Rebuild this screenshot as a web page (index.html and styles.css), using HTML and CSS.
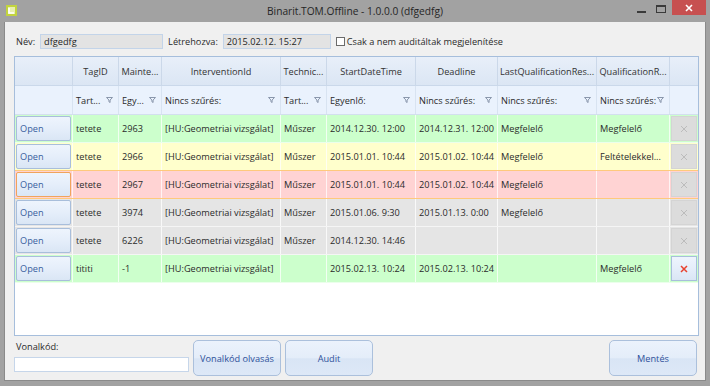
FILE: index.html
```html
<!DOCTYPE html>
<html lang="hu">
<head>
    <meta charset="UTF-8">
    <title>Binarit.TOM.Offline - 1.0.0.0 (dfgedfg)</title>
    <link rel="stylesheet" href="styles.css">
</head>
<body>
    <div class="window">
        <div class="titlebar">
            <svg class="app-icon" width="11" height="11" viewBox="0 0 11 11">
                <rect width="11" height="11" fill="#c2d43e"/>
                <rect x="2" y="2" width="7" height="7" fill="#e9f0b0"/>
                <path d="M3 3v5h5" stroke="#fff" stroke-width="1.6" fill="none"/>
            </svg>
            <div class="title">Binarit.TOM.Offline - 1.0.0.0 (dfgedfg)</div>
            <div class="controls">
                <span class="ctl min"></span>
                <span class="ctl max"></span>
                <span class="ctl close">
                    <svg width="8" height="8" viewBox="0 0 8 8"><path d="M1 1l6 6M7 1l-6 6" stroke="#fff" stroke-width="1.6"/></svg>
                </span>
            </div>
        </div>

        <div class="client">
            <div class="toprow">
                <span class="lbl">Név:</span>
                <div class="field name">dfgedfg</div>
                <span class="lbl created-lbl">Létrehozva:</span>
                <div class="field created">2015.02.12. 15:27</div>
                <label class="check"><span class="box"></span>Csak a nem auditáltak megjelenítése</label>
            </div>

            <div class="grid">
                <div class="row head">
                    <div class="cell"></div>
                    <div class="cell">TagID</div>
                    <div class="cell">Mainte...</div>
                    <div class="cell">InterventionId</div>
                    <div class="cell">Technic...</div>
                    <div class="cell">StartDateTime</div>
                    <div class="cell">Deadline</div>
                    <div class="cell">LastQualificationRes...</div>
                    <div class="cell">QualificationR...</div>
                    <div class="cell"></div>
                </div>
                <div class="row filter">
                    <div class="cell"></div>
                    <div class="cell">Tart...<svg class="funnel" viewBox="0 0 7 6"><path d="M.5.5h6L4.1 3v2.5L2.9 4.7V3z"/></svg></div>
                    <div class="cell">Egy...<svg class="funnel" viewBox="0 0 7 6"><path d="M.5.5h6L4.1 3v2.5L2.9 4.7V3z"/></svg></div>
                    <div class="cell">Nincs szűrés:<svg class="funnel" viewBox="0 0 7 6"><path d="M.5.5h6L4.1 3v2.5L2.9 4.7V3z"/></svg></div>
                    <div class="cell">Tart...<svg class="funnel" viewBox="0 0 7 6"><path d="M.5.5h6L4.1 3v2.5L2.9 4.7V3z"/></svg></div>
                    <div class="cell">Egyenlő:<svg class="funnel" viewBox="0 0 7 6"><path d="M.5.5h6L4.1 3v2.5L2.9 4.7V3z"/></svg></div>
                    <div class="cell">Nincs szűrés:<svg class="funnel" viewBox="0 0 7 6"><path d="M.5.5h6L4.1 3v2.5L2.9 4.7V3z"/></svg></div>
                    <div class="cell">Nincs szűrés:<svg class="funnel" viewBox="0 0 7 6"><path d="M.5.5h6L4.1 3v2.5L2.9 4.7V3z"/></svg></div>
                    <div class="cell">Nincs szűrés:<svg class="funnel" viewBox="0 0 7 6"><path d="M.5.5h6L4.1 3v2.5L2.9 4.7V3z"/></svg></div>
                    <div class="cell"></div>
                </div>

                <div class="row data green">
                    <div class="cell btn-cell"><button class="open">Open</button></div>
                    <div class="cell">tetete</div>
                    <div class="cell">2963</div>
                    <div class="cell">[HU:Geometriai vizsgálat]</div>
                    <div class="cell">Műszer</div>
                    <div class="cell">2014.12.30. 12:00</div>
                    <div class="cell">2014.12.31. 12:00</div>
                    <div class="cell">Megfelelő</div>
                    <div class="cell">Megfelelő</div>
                    <div class="cell btn-cell"><button class="del" disabled><svg viewBox="0 0 8 8"><path d="M1 1l6 6M7 1l-6 6"/></svg></button></div>
                </div>
                <div class="row data yellow">
                    <div class="cell btn-cell"><button class="open">Open</button></div>
                    <div class="cell">tetete</div>
                    <div class="cell">2966</div>
                    <div class="cell">[HU:Geometriai vizsgálat]</div>
                    <div class="cell">Műszer</div>
                    <div class="cell">2015.01.01. 10:44</div>
                    <div class="cell">2015.01.02. 10:44</div>
                    <div class="cell">Megfelelő</div>
                    <div class="cell">Feltételekkel...</div>
                    <div class="cell btn-cell"><button class="del" disabled><svg viewBox="0 0 8 8"><path d="M1 1l6 6M7 1l-6 6"/></svg></button></div>
                </div>
                <div class="row data red">
                    <div class="cell btn-cell"><button class="open focused">Open</button></div>
                    <div class="cell">tetete</div>
                    <div class="cell">2967</div>
                    <div class="cell">[HU:Geometriai vizsgálat]</div>
                    <div class="cell">Műszer</div>
                    <div class="cell">2015.01.01. 10:44</div>
                    <div class="cell">2015.01.02. 10:44</div>
                    <div class="cell">Megfelelő</div>
                    <div class="cell"></div>
                    <div class="cell btn-cell"><button class="del" disabled><svg viewBox="0 0 8 8"><path d="M1 1l6 6M7 1l-6 6"/></svg></button></div>
                </div>
                <div class="row data gray">
                    <div class="cell btn-cell"><button class="open">Open</button></div>
                    <div class="cell">tetete</div>
                    <div class="cell">3974</div>
                    <div class="cell">[HU:Geometriai vizsgálat]</div>
                    <div class="cell">Műszer</div>
                    <div class="cell">2015.01.06. 9:30</div>
                    <div class="cell">2015.01.13. 0:00</div>
                    <div class="cell">Megfelelő</div>
                    <div class="cell"></div>
                    <div class="cell btn-cell"><button class="del" disabled><svg viewBox="0 0 8 8"><path d="M1 1l6 6M7 1l-6 6"/></svg></button></div>
                </div>
                <div class="row data gray">
                    <div class="cell btn-cell"><button class="open">Open</button></div>
                    <div class="cell">tetete</div>
                    <div class="cell">6226</div>
                    <div class="cell">[HU:Geometriai vizsgálat]</div>
                    <div class="cell">Műszer</div>
                    <div class="cell">2014.12.30. 14:46</div>
                    <div class="cell"></div>
                    <div class="cell"></div>
                    <div class="cell"></div>
                    <div class="cell btn-cell"><button class="del" disabled><svg viewBox="0 0 8 8"><path d="M1 1l6 6M7 1l-6 6"/></svg></button></div>
                </div>
                <div class="row data green">
                    <div class="cell btn-cell"><button class="open">Open</button></div>
                    <div class="cell">tititi</div>
                    <div class="cell">-1</div>
                    <div class="cell">[HU:Geometriai vizsgálat]</div>
                    <div class="cell"></div>
                    <div class="cell">2015.02.13. 10:24</div>
                    <div class="cell">2015.02.13. 10:24</div>
                    <div class="cell"></div>
                    <div class="cell">Megfelelő</div>
                    <div class="cell btn-cell"><button class="del"><svg viewBox="0 0 8 8"><path d="M1 1l6 6M7 1l-6 6"/></svg></button></div>
                </div>
            </div>

            <div class="bottom">
                <div class="barcode">
                    <span class="lbl">Vonalkód:</span>
                    <input type="text" class="barcode-input">
                </div>
                <button class="btn">Vonalkód olvasás</button>
                <button class="btn">Audit</button>
                <button class="btn save">Mentés</button>
            </div>
        </div>
    </div>
</body>
</html>
```

FILE: styles.css
```css
* {
    margin: 0;
    padding: 0;
    box-sizing: border-box;
}
body {
    width: 710px;
    height: 386px;
    overflow: hidden;
    font-family: "Open Sans", "Noto Sans", sans-serif;
    font-size: 9.2px;
    color: #2b2b2b;
}
.window {
    width: 710px;
    height: 386px;
    background-color: #a2a2a2;
    display: flex;
    flex-direction: column;
    padding: 0 4px 5px;
}

/* title bar */
.titlebar {
    height: 22px;
    flex: none;
    display: grid;
    grid-template-columns: 1fr auto 1fr;
    align-items: start;
}
.app-icon {
    margin: 5px 0 0 2px;
}
.title {
    padding-top: 4px;
    font-size: 10.2px;
    line-height: 14px;
    color: #262626;
}
.controls {
    justify-self: end;
    display: flex;
    align-items: flex-start;
}
.ctl.min {
    width: 9px;
    height: 2px;
    margin: 11px 10px 0 0;
    background-color: #3a3a3a;
}
.ctl.max {
    width: 10px;
    height: 8px;
    margin: 5px 6px 0 0;
    border: 1px solid #3a3a3a;
    border-top-width: 2px;
}
.ctl.close {
    width: 34px;
    height: 15px;
    background-color: #c75050;
    display: flex;
    align-items: center;
    justify-content: center;
}

/* client area */
.client {
    flex: 1;
    background-color: #f0f0f0;
    border: 1px solid #8a8a8a;
    border-top: none;
    padding: 12px 6px 4px 9px;
    display: flex;
    flex-direction: column;
}
.toprow {
    height: 15px;
    margin-bottom: 7px;
    display: flex;
    align-items: center;
}
.lbl {
    padding-left: 2px;
}
.toprow .lbl {
    margin-right: 5px;
}
.toprow .created-lbl {
    margin-left: 3px;
}
.field {
    height: 15px;
    border: 1px solid #c3d4e9;
    background-color: #e3e3e3;
    padding-left: 3px;
    line-height: 13px;
    color: #1e1e1e;
}
.field.name {
    width: 123px;
}
.field.created {
    width: 108px;
}
.check {
    display: flex;
    align-items: center;
    margin-left: 5px;
}
.check .box {
    width: 9px;
    height: 9px;
    border: 1px solid #6b6b6b;
    background-color: #fff;
    margin-right: 2px;
}

/* data grid */
.grid {
    flex: 1;
    background-color: #fff;
    border: 1px solid #a6bedc;
}
.row {
    display: grid;
    grid-template-columns: 58px 46px 43px 119px 46px 89px 82px 99px 73px 1fr;
    height: 28px;
}
.cell {
    display: flex;
    align-items: center;
    padding-left: 3px;
    white-space: nowrap;
    overflow: hidden;
    border-right: 1px solid rgba(255, 255, 255, 0.75);
}
.cell:last-child {
    border-right: none;
}
.row.head {
    height: 29px;
    background: linear-gradient(#e8eff9, #dbe6f4);
    border-bottom: 1px solid #cad8ea;
}
.row.head .cell {
    justify-content: center;
    padding: 0;
    color: #333;
    border-right-color: #cbd8e9;
}
.row.filter {
    height: 29px;
    background-color: #eaf2fd;
    border-bottom: 1px solid #d3dfee;
}
.row.filter .cell {
    border-right-color: #d8e3f1;
}
.funnel {
    width: 7px;
    height: 6px;
    margin: 0 5px 0 auto;
    flex: none;
}
.funnel path {
    fill: none;
    stroke: #7f8ca3;
    stroke-width: 0.9;
}
.row.data {
    border-bottom: 1px solid rgba(255, 255, 255, 0.6);
}
.green {
    background-color: #ccffcc;
}
.yellow {
    background-color: #ffffcc;
}
.red {
    background-color: #ffd3d3;
    box-shadow: 0 -1px 0 #ffc97c;
    border-bottom-color: #ffc97c !important;
}
.gray {
    background-color: #e5e5e5;
}
.cell.btn-cell {
    padding: 1px;
}
.open {
    width: 100%;
    height: 100%;
    border: 1px solid #a8bedb;
    border-radius: 2px;
    background: linear-gradient(#eef4fd, #e5eefa 50%, #dae6f5);
    color: #3a5e9e;
    font: inherit;
    text-align: left;
    padding-left: 3px;
}
.open.focused {
    border-color: #f0a45c;
}
.del {
    width: 100%;
    height: 100%;
    border: 1px solid #d4d4d4;
    background-color: #dcdcdc;
    display: flex;
    align-items: center;
    justify-content: center;
}
.del svg {
    width: 8px;
    height: 8px;
}
.del path {
    stroke: #bcbcbc;
    stroke-width: 1;
}
.del:not([disabled]) {
    border-color: #a8bedb;
    background: linear-gradient(#eef4fd, #e5eefa 50%, #dae6f5);
}
.del:not([disabled]) path {
    stroke: #e8412f;
    stroke-width: 1.5;
}

/* bottom */
.bottom {
    height: 36px;
    flex: none;
    margin-top: 4px;
    display: flex;
}
.barcode {
    width: 175px;
    display: flex;
    flex-direction: column;
    justify-content: space-between;
    padding-bottom: 4px;
}
.barcode .lbl {
    line-height: 14px;
}
.barcode-input {
    height: 15px;
    border: 1px solid #c6d6ea;
    background-color: #fff;
}
.btn {
    width: 88px;
    margin-left: 4px;
    border: 1px solid #abc0dc;
    border-radius: 5px;
    background: linear-gradient(#ebf2fc, #e4edf9 50%, #d9e5f5 52%, #dde8f7);
    color: #2f519b;
    font: inherit;
}
.btn.save {
    margin-left: auto;
    margin-right: 2px;
}
```
